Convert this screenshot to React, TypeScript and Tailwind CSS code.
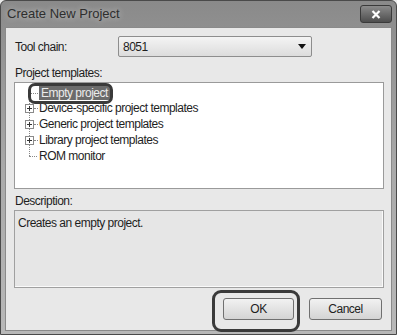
import { ReactNode } from "react";

function PlusBox() {
  return (
    <svg width="9" height="9" viewBox="0 0 9 9" className="shrink-0">
      <rect x="0.5" y="0.5" width="8" height="8" fill="#fff" stroke="#8a8a8a" />
      <path d="M2 4.5h5M4.5 2v5" stroke="#333" strokeWidth="1" />
    </svg>
  );
}

function TreeRow({ children, plus, last }: { children: ReactNode; plus?: boolean; last?: boolean }) {
  return (
    <div className="relative flex h-[16px] items-center pl-[10px]">
      {plus ? (
        <PlusBox />
      ) : (
        <span className="relative h-[9px] w-[9px]">
          {last && <span className="absolute left-[4px] top-[-8px] h-[12px] border-l border-dotted border-[#888]" />}
          <span className="absolute left-[4px] top-[4px] w-[8px] border-t border-dotted border-[#888]" />
        </span>
      )}
      {plus && <span className="w-[4px] border-t border-dotted border-[#888]" />}
      <span className={plus ? "ml-[1px]" : "ml-[5px]"}>{children}</span>
    </div>
  );
}

export default function App() {
  return (
    <div
      className="relative h-[335px] w-[397px] overflow-hidden bg-[#e9e9e9] text-[12px] tracking-[-0.5px] text-[#1e1e1e]"
      style={{ fontFamily: '"Liberation Sans", Arial, sans-serif' }}
    >
      <div className="flex h-full flex-col rounded-t-[6px] border border-[#4a4a4a] bg-gradient-to-b from-[#8a8a8a] via-[#a9a9a9] to-[#b8b8b8]">
        {/* Title bar */}
        <div className="flex h-[26px] shrink-0 items-center justify-between pl-[6px] pr-[4px]">
          <span className="text-[13px] tracking-[0px] text-[#2e2e2e] [text-shadow:0_0_6px_rgba(255,255,255,0.6)]">
            Create New Project
          </span>
          <div className="mt-[4px] flex h-[18px] w-[32px] items-center justify-center self-start rounded-[3px] border border-[#3a3a3a] bg-gradient-to-b from-[#8c8c8c] to-[#4e4e4e]">
            <svg width="10" height="9" viewBox="0 0 10 9">
              <path d="M1.5 1l7 7M8.5 1l-7 7" stroke="#fff" strokeWidth="2.2" />
            </svg>
          </div>
        </div>

        {/* Client area */}
        <div className="relative mx-[4px] mb-[3px] flex flex-1 flex-col border border-[#8a8a8a] bg-[#e8e8e8] px-[8px]">
          <div className="mt-[8px] flex h-[21px] items-center">
            <span className="w-[104px] pl-[1px]">Tool chain:</span>
            <div className="flex h-[21px] w-[194px] items-center justify-between rounded-[2px] border border-[#8d8d8d] bg-gradient-to-b from-[#f4f4f4] to-[#dcdcdc] pl-[4px] pr-[5px]">
              <span>8051</span>
              <svg width="8" height="5" viewBox="0 0 8 5">
                <path d="M0 0h8L4 5z" fill="#111" />
              </svg>
            </div>
          </div>

          <div className="mt-[8px] h-[16px] pl-[1px] leading-[16px]">Project templates:</div>

          <div className="mt-[1px] h-[107px] w-[370px] border border-[#9a9a9a] bg-white pt-[3px]">
            <div className="relative">
              <span className="absolute left-[14px] top-[6px] h-[62px] border-l border-dotted border-[#888]" />
              <div className="relative flex h-[14px] items-center pl-[14px]">
                <span className="w-[9px] border-t border-dotted border-[#888]" />
                <span className="ml-[1px] bg-[#6b6b6b] px-[2px] leading-[14px] text-[#ececec]">Empty project</span>
              </div>
              <TreeRow plus>Device-specific project templates</TreeRow>
              <TreeRow plus>Generic project templates</TreeRow>
              <TreeRow plus>Library project templates</TreeRow>
              <TreeRow last>ROM monitor</TreeRow>
            </div>
          </div>

          <div className="mt-[4px] h-[16px] pl-[1px] leading-[16px]">Description:</div>

          <div className="mt-[1px] h-[78px] w-[370px] border border-[#a0a0a0] bg-[#e6e6e6] px-[3px] pt-[3px] shadow-[inset_-1px_-1px_0_#fafafa]">
            Creates an empty project.
          </div>

          <div className="mt-[10px] flex justify-end gap-[15px] pr-[1px]">
            <button className="h-[22px] w-[71px] rounded-[3px] border border-[#707070] bg-gradient-to-b from-[#f2f2f2] to-[#d4d4d4] text-[12px] text-[#1e1e1e]">
              OK
            </button>
            <button className="h-[22px] w-[73px] rounded-[3px] border border-[#707070] bg-gradient-to-b from-[#f2f2f2] to-[#d4d4d4] text-[12px] text-[#1e1e1e]">
              Cancel
            </button>
          </div>
        </div>
      </div>

      {/* annotation marks */}
      <div className="pointer-events-none absolute left-[28px] top-[83px] h-[21px] w-[85px] rounded-[7px] border-[3px] border-[#3a3a3a]" />
      <div className="pointer-events-none absolute left-[212px] top-[290px] h-[42px] w-[88px] rounded-[9px] border-[3px] border-[#3a3a3a]" />
    </div>
  );
}
